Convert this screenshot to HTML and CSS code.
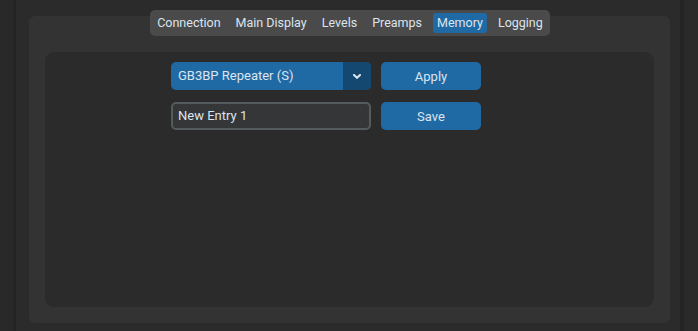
FILE: index.html
```html
<!DOCTYPE html>
<html>
<head>
<meta charset="utf-8">
<link rel="stylesheet" href="styles.css">
</head>
<body>
<div class="window">
  <div class="tabview">
    <div class="tabbar">
      <span class="tab">Connection</span>
      <span class="tab">Main Display</span>
      <span class="tab">Levels</span>
      <span class="tab">Preamps</span>
      <span class="tab active">Memory</span>
      <span class="tab">Logging</span>
    </div>
    <div class="outer">
      <div class="inner">
        <div class="form">
          <div class="combo">
            <span class="combo-text">GB3BP Repeater (S)</span>
            <span class="combo-btn">
              <svg width="8" height="5" viewBox="0 0 8 5"><path d="M1 1 L4 3.8 L7 1" fill="none" stroke="#dce4ee" stroke-width="2" stroke-linecap="square"/></svg>
            </span>
          </div>
          <button class="btn">Apply</button>
          <div class="entry">New Entry 1</div>
          <button class="btn">Save</button>
        </div>
      </div>
    </div>
  </div>
</div>
</body>
</html>
```
FILE: styles.css
```css
html, body {
  margin: 0;
  padding: 0;
}
body {
  width: 698px;
  height: 331px;
  overflow: hidden;
  background: linear-gradient(to right, #292929 0 13px, #242424 13px 16px, #2b2b2b 16px 680px, #242424 680px 684px, #2a2a2a 684px);
  font-family: Roboto, "Liberation Sans", sans-serif;
  font-size: 13px;
  color: #dce4ee;
}
.window {
  padding: 10px 28px 0 29px;
}
.tabview {
  display: flex;
  flex-direction: column;
  align-items: center;
}
.tabbar {
  position: relative;
  z-index: 1;
  display: flex;
  gap: 6px;
  padding: 3px 3px;
  height: 20px;
  background: #4a4a4a;
  border-radius: 5px;
  margin-left: 1px;
  font-size: 12.5px;
}
.tab {
  display: flex;
  align-items: center;
  padding: 0 4.5px;
  height: 20px;
  border-radius: 3px;
  line-height: 20px;
}
.tab.active {
  background: #1f6aa5;
}
.outer {
  align-self: stretch;
  margin-top: -20px;
  height: 307px;
  box-sizing: border-box;
  background: #333333;
  border-radius: 6px;
  padding: 36px 16px 16px 16px;
}
.inner {
  height: 255px;
  background: #2b2b2b;
  border-radius: 9px;
  padding: 10px 0 0 126px;
  box-sizing: border-box;
}
.form {
  display: grid;
  grid-template-columns: 200px 100px;
  grid-auto-rows: 28px;
  column-gap: 10px;
  row-gap: 12px;
}
.combo {
  display: flex;
  background: #1f6aa5;
  border-radius: 5px;
  overflow: hidden;
}
.combo-text {
  flex: 1;
  padding-left: 7px;
  line-height: 28px;
}
.combo-btn {
  width: 28px;
  background: #144870;
  display: flex;
  align-items: center;
  justify-content: center;
}
.btn {
  border: 0;
  background: #1f6aa5;
  color: #dce4ee;
  border-radius: 5px;
  font-family: inherit;
  font-size: 13px;
  padding: 0;
}
.entry {
  box-sizing: border-box;
  background: #343638;
  border: 2px solid #565b5e;
  border-radius: 5px;
  padding-left: 5px;
  line-height: 24px;
}
```
